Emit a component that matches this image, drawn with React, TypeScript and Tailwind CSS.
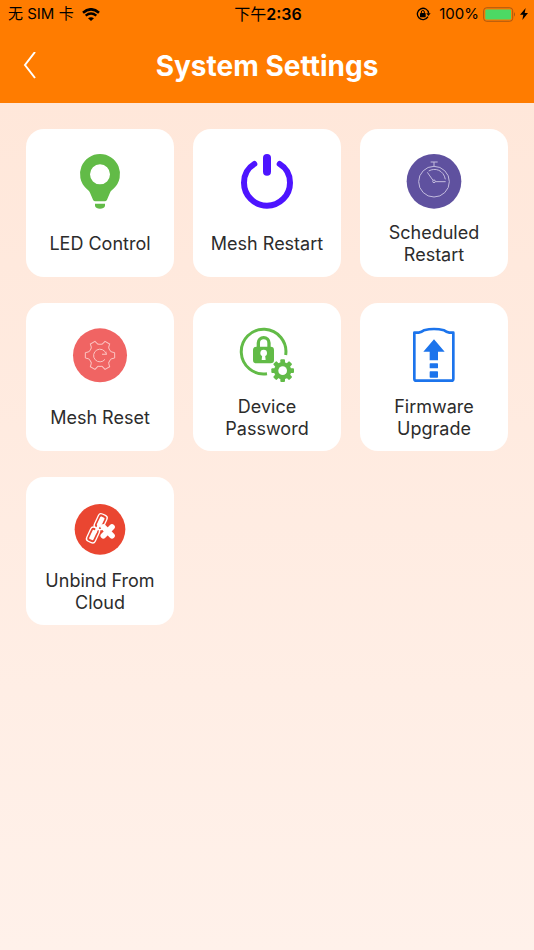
import React from 'react'

type Setting = {
  label: string
  icon: React.ReactNode
}

const iconClass = 'size-[54px] shrink-0 overflow-visible'

function LedIcon() {
  return (
    <svg viewBox="0 0 162 162" className={iconClass} fill="#62bb47" aria-hidden="true">
      <path
        fillRule="evenodd"
        d="M81 0a60 60 0 0 1 42 103c-6 5-10 8-12 13l-9 21q-2 5-7 5H67q-5 0-7-5l-9-21c-2-5-6-8-12-13A60 60 0 0 1 81 0Zm0 31a30 30 0 1 0 0 60 30 30 0 0 0 0-60Z"
      />
      <path d="M66 149h30v7q-3 8-15 8t-15-8Z" />
    </svg>
  )
}

function PowerIcon() {
  return (
    <svg
      viewBox="0 0 162 162"
      className={iconClass}
      fill="none"
      stroke="#4d14ff"
      strokeLinecap="round"
      aria-hidden="true"
    >
      <path strokeWidth="18" d="M43 30C23 42 12 62 12 86a69 69 0 0 0 138 0c0-24-11-44-31-56" />
      <path strokeWidth="24" d="M81 12v41" />
    </svg>
  )
}

function TimerIcon() {
  return (
    <svg
      viewBox="0 0 162 162"
      className={iconClass}
      fill="none"
      stroke="#c3bcde"
      strokeWidth="3"
      aria-hidden="true"
    >
      <circle cx="81" cy="82" r="82" fill="#5f519f" stroke="none" />
      <circle cx="81" cy="83" r="46" />
      <path d="M71 24h21M81 24v12M78 79 61 55M85 83h31M65 51c19-11 45-3 50 25" />
      <circle cx="81" cy="82" r="4" />
    </svg>
  )
}

function ResetIcon() {
  return (
    <svg
      viewBox="0 0 162 162"
      className={iconClass}
      fill="none"
      stroke="#fbc5c3"
      strokeWidth="3"
      aria-hidden="true"
    >
      <circle cx="81" cy="82" r="81" fill="#f06463" stroke="none" />
      <g transform="translate(81 82)">
        {[0, 60, 120, 180, 240, 300].map(angle => (
          <path
            key={angle}
            transform={`rotate(${angle})`}
            d="M29-17Q31-10 36-10L44-8V8L36 10Q31 10 29 17"
          />
        ))}
      </g>
      <path d="M99 77A19 19 0 1 0 96 94" />
      <path fill="#fbc5c3" stroke="none" d="M87 77h12V68l3 12H87Z" />
    </svg>
  )
}

function PasswordIcon() {
  return (
    <svg viewBox="0 0 162 162" className={iconClass} fill="#62bb47" aria-hidden="true">
      <path
        fill="none"
        stroke="#62bb47"
        strokeWidth="9"
        d="M137 81A67 67 0 1 0 81 137"
      />
      <path fill="none" stroke="#62bb47" strokeWidth="10" d="M55 58V45a16 16 0 0 1 32 0v13" />
      <rect x="39" y="56" width="63" height="50" rx="10" />
      <circle cx="71" cy="75" r="10" fill="#fff" />
      <path fill="#fff" d="M67 78h8l2 18H65Z" />
      <g transform="translate(128 128)">
        {[0, 45, 90, 135].map(angle => (
          <rect
            key={angle}
            x="-7"
            y="-34"
            width="14"
            height="68"
            rx="3"
            transform={`rotate(${angle})`}
          />
        ))}
        <circle r="26" />
        <circle r="13" fill="#fff" />
      </g>
    </svg>
  )
}

function FirmwareIcon() {
  return (
    <svg viewBox="0 0 162 162" className={iconClass} fill="#1c74ec" aria-hidden="true">
      <path
        fill="none"
        stroke="#1c74ec"
        strokeWidth="8"
        strokeLinejoin="round"
        d="M22 14h13q9-1 16-7 30-8 60 0 7 6 16 7h12v138q0 6-6 6H28q-6 0-6-6Z"
      />
      <path d="m81 34 32 37H93v26H68V71H49Z" />
      <rect x="68" y="106" width="25" height="15" rx="2" />
      <rect x="68" y="130" width="25" height="19" rx="2" />
    </svg>
  )
}

function UnbindIcon() {
  return (
    <svg viewBox="0 0 162 162" className={iconClass} fill="none" stroke="#fff" aria-hidden="true">
      <circle cx="81" cy="82" r="76" fill="#ea4631" stroke="none" />
      <g strokeWidth="4">
        <g transform="translate(83 59) rotate(25)">
          <rect x="-14" y="-23" width="28" height="46" rx="9" />
          <rect x="-7" y="-15" width="14" height="30" rx="3" fill="#fff" stroke="none" />
        </g>
        <g transform="translate(60 99) rotate(25)">
          <rect x="-14" y="-23" width="28" height="46" rx="9" />
          <rect x="-7" y="-15" width="14" height="30" rx="3" fill="#fff" stroke="none" />
        </g>
        <path d="m79 68-14 26" strokeWidth="8" />
      </g>
      <path strokeWidth="17" strokeLinecap="round" d="m91 75 26 26M117 75 91 101" />
    </svg>
  )
}

const settings: Setting[] = [
  { label: 'LED Control', icon: <LedIcon /> },
  { label: 'Mesh Restart', icon: <PowerIcon /> },
  { label: 'Scheduled Restart', icon: <TimerIcon /> },
  { label: 'Mesh Reset', icon: <ResetIcon /> },
  { label: 'Device Password', icon: <PasswordIcon /> },
  { label: 'Firmware Upgrade', icon: <FirmwareIcon /> },
  { label: 'Unbind From Cloud', icon: <UnbindIcon /> },
]

function StatusBar() {
  return (
    <div className="grid h-7 grid-cols-[1fr_auto_1fr] items-center pr-1.5 pl-2 text-[15px] leading-5 text-black">
      <div className="flex items-center gap-2">
        <span>无 SIM 卡</span>
        <svg viewBox="0 0 54 39" className="h-[13px] w-[18px]" fill="none" stroke="#000" aria-label="Wi-Fi">
          <path strokeWidth="8" d="M3 14Q27-6 51 14" />
          <path strokeWidth="7" d="M11 23q16-13 32 0" />
          <path fill="#000" stroke="none" d="m27 39-9-8q9-7 18 0Z" />
        </svg>
      </div>
      <span className="text-center text-base leading-5">
        下午<span className="font-semibold">2:36</span>
      </span>
      <div className="flex items-center justify-end">
        <svg viewBox="0 0 45 42" className="mr-2 h-[14px] w-[15px]" fill="none" stroke="#000" aria-label="Rotation lock">
          <path strokeWidth="4" d="M36 29a17 17 0 1 1 2-10" />
          <path fill="#000" stroke="none" d="M31 19h13l-7 8Z" />
          <rect x="12" y="18" width="17" height="13" rx="2" fill="#000" stroke="none" />
          <path strokeWidth="3" d="M16 19v-4a4 4 0 0 1 9 0v4" />
        </svg>
        <span>100%</span>
        <svg viewBox="0 0 100 45" className="ml-1 h-[15px] w-[33px]" aria-label="Battery">
          <rect x="2" y="2" width="88" height="41" rx="9" fill="none" stroke="#a85712" strokeWidth="3" />
          <rect x="7" y="7" width="78" height="31" rx="4" fill="#4cd964" />
          <path d="M94 15q6 7 0 14Z" fill="#a85712" />
        </svg>
        <svg viewBox="0 0 24 36" className="ml-1 h-3 w-2" aria-label="Charging">
          <path d="M17 0 0 20h10L7 36l17-21H14Z" />
        </svg>
      </div>
    </div>
  )
}

function App() {
  return (
    <div className="flex min-h-screen flex-col bg-linear-to-b from-[#ffe6d8] to-[#fff1ea] font-['Inter','Noto_Sans_CJK_SC',sans-serif]">
      <header className="bg-[#ff7c00]">
        <StatusBar />
        <div className="grid h-[75px] grid-cols-[56px_1fr_56px] items-center">
          <button type="button" aria-label="Back" className="flex h-full items-center pl-[23px]">
            <svg viewBox="0 0 13 28" className="h-7 w-[13px]" fill="none" stroke="#fff" strokeWidth="2">
              <path d="M12 0 2 13l10 13" />
            </svg>
          </button>
          <h1 className="text-center text-[28px] leading-9 font-bold text-white">
            System Settings
          </h1>
        </div>
      </header>
      <main className="grid grid-cols-3 gap-x-[19px] gap-y-[26px] p-[26px]">
        {settings.map(({ label, icon }) => (
          <button
            key={label}
            type="button"
            className="flex aspect-square flex-col items-center rounded-[18px] bg-white px-4 pt-[25px]"
          >
            {icon}
            <span className="flex flex-1 items-center pt-0.5 text-lg leading-[22px] text-[#2c2c2c]">
              {label}
            </span>
          </button>
        ))}
      </main>
    </div>
  )
}

export default App
